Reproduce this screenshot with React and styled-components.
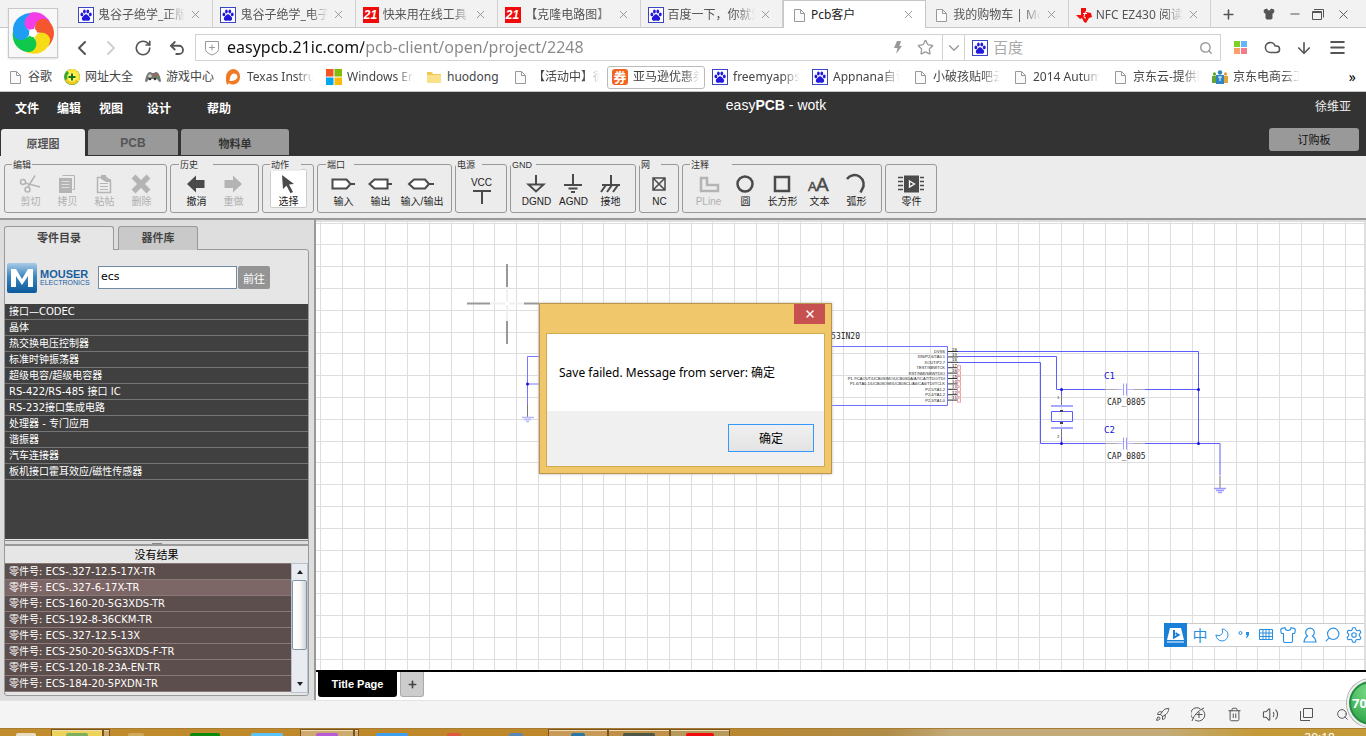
import React from "react";
import styled, { createGlobalStyle, css } from "styled-components";
import {
  ChevronDown,
  ChevronLeft,
  ChevronRight,
  Cloud,
  ArrowDown,
  Menu,
  Minus,
  Moon,
  Plus,
  Rocket,
  RotateCw,
  Search,
  Settings,
  Shirt,
  Star,
  Trash2,
  Undo2,
  Volume2,
  X,
} from "lucide-react";

const ui = `"Noto Sans", "Noto Sans CJK SC", sans-serif`;
const arial = `"Liberation Sans", "Noto Sans CJK SC", sans-serif`;
const verdana = `"DejaVu Sans", "Noto Sans CJK SC", sans-serif`;

const browserTabs = [
  { icon: "baidu", title: "鬼谷子绝学_正版" },
  { icon: "baidu", title: "鬼谷子绝学_电子" },
  { icon: "ic21", title: "快来用在线工具" },
  { icon: "ic21", title: "【克隆电路图】 -" },
  { icon: "baidu", title: "百度一下，你就知" },
  { icon: "page", title: "Pcb客户", active: true },
  { icon: "page", title: "我的购物车 | Mo" },
  { icon: "ti", title: "NFC EZ430 阅读" },
];

const bookmarks = [
  { icon: "page", title: "谷歌", width: 24 },
  { icon: "plus", title: "网址大全", width: 48 },
  { icon: "game", title: "游戏中心", width: 48 },
  { icon: "orange", title: "Texas Instru", width: 67, fade: true },
  { icon: "windows", title: "Windows En", width: 67, fade: true },
  { icon: "folder", title: "huodong", width: 53 },
  { icon: "page", title: "【活动中】德", width: 67, fade: true },
  { icon: "coupon", title: "亚马逊优惠券", width: 67, fade: true, boxed: true },
  { icon: "baidu", title: "freemyapps", width: 67, fade: true },
  { icon: "baidu", title: "Appnana自认", width: 67, fade: true },
  { icon: "page", title: "小破孩贴吧云", width: 67, fade: true },
  { icon: "page", title: "2014 Autum", width: 67, fade: true },
  { icon: "page", title: "京东云-提供图", width: 67, fade: true },
  { icon: "people", title: "京东电商云工", width: 67, fade: true },
];

const categories = [
  "接口—CODEC",
  "晶体",
  "热交换电压控制器",
  "标准时钟振荡器",
  "超级电容/超级电容器",
  "RS-422/RS-485 接口 IC",
  "RS-232接口集成电路",
  "处理器 - 专门应用",
  "谐振器",
  "汽车连接器",
  "板机接口霍耳效应/磁性传感器",
];

const parts = [
  "ECS-.327-12.5-17X-TR",
  "ECS-.327-6-17X-TR",
  "ECS-160-20-5G3XDS-TR",
  "ECS-192-8-36CKM-TR",
  "ECS-.327-12.5-13X",
  "ECS-250-20-5G3XDS-F-TR",
  "ECS-120-18-23A-EN-TR",
  "ECS-184-20-5PXDN-TR",
];

const pins = [
  "DVSS",
  "XIN/P2.6/TA0.1",
  "XOUT/P2.7",
  "TEST/SBWTCK",
  "RST/NMI/SBWTDIO",
  "P1.7/CAOUT/UCB0SIMO/UCB0SDA/A7/CA7/TDO/TDI",
  "P1.6/TA0.1/UCB0SOMI/UCB0SCL/A6/CA6/TDI/TCLK",
  "P2.5/TA1.2",
  "P2.4/TA1.2",
  "P2.3/TA1.0",
];

const Paw = () => (
  <g fill="#2319dc">
    <ellipse cx="3.9" cy="7.4" rx="1.4" ry="1.9" />
    <ellipse cx="6.4" cy="4.4" rx="1.4" ry="2" />
    <ellipse cx="9.8" cy="4.4" rx="1.4" ry="2" />
    <ellipse cx="12.3" cy="7.4" rx="1.4" ry="1.9" />
    <path d="M8 7.2c1.6 0 2.2 1.6 3.3 2.6 1.5 1.4 1 4-1.2 4-.9 0-1.3-.3-2.1-.3s-1.2.3-2.1.3c-2.2 0-2.7-2.6-1.2-4C5.8 8.8 6.4 7.2 8 7.2z" />
  </g>
);

function SiteIcon({ name }) {
  const shapes = {
    baidu: (
      <>
        <rect x="0.5" y="0.5" width="15" height="15" fill="#fff" stroke="#3a46c8" />
        <Paw />
      </>
    ),
    ic21: (
      <>
        <rect width="16" height="16" fill="#f00b0b" />
        <text x="7.5" y="12" textAnchor="middle" fill="#fff" fontSize="12" fontWeight="700" fontStyle="italic" fontFamily="Liberation Sans, sans-serif">
          21
        </text>
      </>
    ),
    page: <path d="M3.5 2.5h6l4 4v8h-10zM9.5 2.5v4h4" fill="#fafafa" stroke="#999" />,
    ti: (
      <>
        <path d="M5 1h5v4l5 1 1 4-3 1-3 5-2-1-2-4-2 1-4-4h5z" fill="#f20d0d" />
        <path d="M9.5 4.5L8 9.5q0 2 2 1.5M7 6.5h4" stroke="#fff" fill="none" />
      </>
    ),
    plus: (
      <>
        <circle cx="8" cy="8" r="8" fill="#3fa72f" />
        <path d="M8 0a8 8 0 0 1 6 13L3 2a8 8 0 0 1 5-2z" fill="#ffe53a" />
        <path d="M1 11a8 8 0 0 0 13 2L8 8z" fill="#f3c81c" />
        <circle cx="8" cy="8" r="4.8" fill="#fff35c" />
        <path d="M8 4.5v7M4.5 8h7" stroke="#17721c" strokeWidth="2" />
      </>
    ),
    game: (
      <>
        <path d="M3 4q2-2 4 0h2q2-2 4 0 2 2 3 8-1 3-4-2H4q-3 5-4 2Q1 6 3 4z" fill="#777" />
        <path d="M5 5v4M3 7h4" stroke="#e4f3e0" />
        <circle cx="11" cy="6" r="1.2" fill="#e64b3c" />
        <circle cx="13" cy="8" r="1.2" fill="#44a044" />
        <circle cx="5" cy="10" r="1.3" fill="#333" />
        <circle cx="10" cy="10" r="1.3" fill="#333" />
      </>
    ),
    orange: (
      <path
        fillRule="evenodd"
        d="M8 0a8 8 0 0 1 0 15.5c-2 0-4-.5-5-1.5l-2 2c-1-3-1-5-1-8a8 8 0 0 1 8-8zm0 4.500c-2 0-3.500 2-4 4.500l-.5 3c2 0 5 0 6.500-1.500 3-2.500 1-6-2-6z"
        fill="#f07a24"
      />
    ),
    windows: (
      <>
        <path d="M0 0h7.5v7.5H0z" fill="#f35325" />
        <path d="M8.5 0H16v7.5H8.5z" fill="#81bc06" />
        <path d="M0 8.5h7.5V16H0z" fill="#05a6f0" />
        <path d="M8.5 8.5H16V16H8.5z" fill="#ffba08" />
      </>
    ),
    folder: (
      <>
        <path d="M1 3h5l1 2h8v9H1z" fill="#f2c855" />
        <path d="M1 6h14v8H1z" fill="#fbe08a" />
      </>
    ),
    coupon: (
      <>
        <rect width="16" height="16" rx="3" fill="#f2641e" />
        <text x="8" y="13" textAnchor="middle" fill="#fff" fontSize="13" fontWeight="700" fontFamily="Noto Sans CJK SC, sans-serif">
          券
        </text>
      </>
    ),
    people: (
      <>
        <circle cx="2.5" cy="5" r="1.7" fill="#61a534" />
        <path d="M0 7h5v7H0z" fill="#61a534" />
        <circle cx="13.5" cy="5" r="1.7" fill="#e3a23a" />
        <path d="M11 7h5v7h-5z" fill="#e3a23a" />
        <circle cx="8" cy="3.5" r="2.2" fill="#2d85c8" />
        <path d="M4 6h8v9H4z" fill="#2d85c8" />
        <path d="M8 8v4M6 8h4" stroke="#fff" />
      </>
    ),
  };
  return (
    <Favicon viewBox="0 0 16 16" aria-hidden="true">
      {shapes[name]}
    </Favicon>
  );
}

function Pinwheel() {
  const petals = ["#f23de8", "#f4562f", "#f6dc17", "#10c94c", "#1f9df5"];
  return (
    <svg width="44" height="44" viewBox="-22 -22 44 44" aria-hidden="true">
      {petals.map((color, i) => (
        <path
          key={color}
          d="M-1 -3C-8 -4 -12 -10 -9 -16C-4 -22 8 -23 15 -14C17 -12 18 -9 18 -7C12 -13 3 -12 1 -3z"
          fill={color}
          transform={`rotate(${i * 72 - 4})`}
        />
      ))}
      <circle r="4" fill="#fff" />
    </svg>
  );
}

const toolIcons = {
  cut: (
    <g fill="none" stroke="currentColor" strokeWidth="1.5">
      <circle cx="5" cy="8" r="2.5" />
      <circle cx="9.5" cy="15.5" r="2.5" />
      <path d="M7 9l15 4M10 13l7-11.5" />
    </g>
  ),
  copy: (
    <>
      <path d="M7.5 1.5h12v14M19.5 15.5h-2" fill="none" stroke="currentColor" />
      <path d="M4 4h13v15H4z" fill="currentColor" />
      <path d="M6.5 7.5h8M6.5 10.5h8M6.5 13.5h8" stroke="#ddd" />
    </>
  ),
  paste: (
    <>
      <path d="M5.5 3.5h9l4 4v11h-13z" fill="#eee" stroke="currentColor" strokeWidth="1.5" />
      <path d="M9 1h5v4h5v3h-5l-5-3z" fill="currentColor" />
      <path d="M8 9.5h8M8 12.5h8M8 15.5h8" stroke="currentColor" />
    </>
  ),
  remove: <path d="M4.500 2.500l15 15M19.500 2.500l-15 15" stroke="currentColor" strokeWidth="5.5" />,
  undo: <path d="M3 10l9-8.5V6h8.5v8H12v4.5z" fill="currentColor" />,
  redo: <path d="M21 10l-9-8.5V6H3.5v8H12v4.5z" fill="currentColor" />,
  select: <path d="M6 1l12 9-5 .5 4 7.5-2.5 1.2-4-7.5L7 15z" fill="currentColor" />,
  input: (
    <g fill="none" stroke="currentColor" strokeWidth="2">
      <path d="M1.5 5.5h14l4 4.5-4 4.5h-14z" fill="#fff" />
      <path d="M19 10h5" />
    </g>
  ),
  output: (
    <g fill="none" stroke="currentColor" strokeWidth="2">
      <path d="M19.5 5.5h-13L1.5 10l5 4.5h13z" fill="#fff" />
      <path d="M19 10h5" />
    </g>
  ),
  inout: (
    <g fill="none" stroke="currentColor" strokeWidth="2">
      <path d="M5 5.5h11l4 4.5-4 4.500H5L0 10z" fill="#fff" />
      <path d="M20 10h5" />
    </g>
  ),
  dgnd: (
    <path d="M12 1v9.5M4.5 10.5h15L12 17.5z" fill="none" stroke="currentColor" strokeWidth="2" />
  ),
  agnd: (
    <path d="M12 0v11M3 11h18M7.5 14.5h9M10 18h4" fill="none" stroke="currentColor" strokeWidth="2" />
  ),
  chassis: (
    <path d="M13 1v10M4 11h18M8 11l-5 7M14 11l-5 7M20 11l-5 7" fill="none" stroke="currentColor" strokeWidth="2" />
  ),
  nc: (
    <path d="M6 4h12v12H6zM6 4l12 12M18 4L6 16" fill="none" stroke="currentColor" strokeWidth="1.5" />
  ),
  pline: (
    <path d="M5 4h6v7h11v6H5z" fill="none" stroke="currentColor" strokeWidth="2.5" />
  ),
  circle: <circle cx="12" cy="10" r="7.5" fill="none" stroke="currentColor" strokeWidth="2.5" />,
  rect: <path d="M5 3h14v14H5z" fill="none" stroke="currentColor" strokeWidth="2.5" />,
  text: (
    <g fill="currentColor" stroke="currentColor" strokeWidth="0.5" fontFamily="Liberation Sans, sans-serif">
      <text x="1" y="17" fontSize="13">A</text>
      <text x="9" y="17" fontSize="19">A</text>
    </g>
  ),
  arc: <path d="M3 5A9 9 0 0 1 18 15.5l-1.5 3" fill="none" stroke="currentColor" strokeWidth="2.5" />,
  chip: (
    <>
      <path d="M5 1.5h15v17H5z" fill="currentColor" />
      <path d="M-1 3.5h5M-1 7.5h5M-1 11.5h5M-1 15.5h5M21 3.5h4M21 7.5h4M21 11.5h4M21 15.5h4" stroke="currentColor" strokeWidth="1.5" />
      <path d="M10.5 7l5 3-5 3z" fill="none" stroke="#fff" strokeWidth="1.3" />
    </>
  ),
};

const toolGroups = [
  {
    title: "编辑",
    left: 7,
    width: 20,
    tools: [
      { icon: "cut", label: "剪切", disabled: true },
      { icon: "copy", label: "拷贝", disabled: true },
      { icon: "paste", label: "粘帖", disabled: true },
      { icon: "remove", label: "删除", disabled: true },
    ],
  },
  {
    title: "历史",
    left: 8,
    width: 34,
    tools: [
      { icon: "undo", label: "撤消" },
      { icon: "redo", label: "重做", disabled: true },
    ],
  },
  { title: "动作", left: 7, width: 31, tools: [{ icon: "select", label: "选择", active: true }] },
  {
    title: "端口",
    left: 8,
    width: 28,
    tools: [
      { icon: "input", label: "输入" },
      { icon: "output", label: "输出" },
      { icon: "inout", label: "输入/输出", wide: true },
    ],
  },
  { title: "电源", left: 0, width: 26, tools: [{ vcc: true, label: "VCC" }] },
  {
    title: "GND",
    left: 0,
    width: 25,
    tools: [
      { icon: "dgnd", label: "DGND" },
      { icon: "agnd", label: "AGND" },
      { icon: "chassis", label: "接地" },
    ],
  },
  { title: "网", left: 0, width: 21, tools: [{ icon: "nc", label: "NC", narrow: true }] },
  {
    title: "注释",
    left: 7,
    width: 42,
    tools: [
      { icon: "pline", label: "PLine", disabled: true },
      { icon: "circle", label: "圆" },
      { icon: "rect", label: "长方形" },
      { icon: "text", label: "文本" },
      { icon: "arc", label: "弧形" },
    ],
  },
  { tools: [{ icon: "chip", label: "零件" }] },
];

function Tool({ tool }) {
  return (
    <ToolButton
      type="button"
      disabled={tool.disabled}
      $active={tool.active}
      $width={tool.wide ? 46 : tool.narrow ? 25 : 37}
    >
      {tool.vcc ? (
        <>
          <ToolLabel>{tool.label}</ToolLabel>
          <svg width="24" height="15" viewBox="0 0 24 15" aria-hidden="true">
            <path d="M3 2h18M12 2v13" stroke="currentColor" strokeWidth="2" />
          </svg>
        </>
      ) : (
        <>
          <ToolIcon viewBox="1 0 24 20" aria-hidden="true">
            {toolIcons[tool.icon]}
          </ToolIcon>
          <ToolLabel>{tool.label}</ToolLabel>
        </>
      )}
    </ToolButton>
  );
}

function Capacitor({ y, name }) {
  return (
    <>
      <path d={`M1105.5 ${y}h12M1132.5 ${y}h12`} stroke="#a9a9b8" />
      <path d={`M1117.5 ${y}h5M1127 ${y}h5.5`} stroke="#b8b8ff" />
      <path d={`M1123.5 ${y - 6}v12M1126.5 ${y - 6}v12`} stroke="#9a9aff" />
      <text x="1104" y={y - 11} fontSize="9" fill="#1414d8">{name}</text>
      <text x="1107" y={y + 15} fontSize="8" fill="#222">CAP_0805</text>
    </>
  );
}

// drawn in page coordinates, shifted back to the canvas origin
function Schematic() {
  const step = 21.8;
  const pinY = (i) => 351.5 + i * 5.4;
  return (
    <Drawing aria-hidden="true">
      <g stroke="#dedede" shapeRendering="crispEdges">
        {Array.from({ length: 80 }, (_, i) => {
          const x = Math.round(4 + i * step) + 0.5;
          return <line key={x} x1={x} x2={x} y1="0" y2="100%" />;
        })}
        {Array.from({ length: 50 }, (_, i) => {
          const y = Math.round(i * step + 0.5) + 0.5;
          return <line key={y} x1="0" x2="100%" y1={y} y2={y} />;
        })}
      </g>
      <g transform="translate(-316 -222)" fill="none" fontFamily="DejaVu Sans Mono, Liberation Mono, monospace">
        <path d="M507 264v23M507 321v23M467 303.5h23M524 303.5h15" stroke="#999" strokeWidth="2" />
        <path d="M507 287v34M490 303.5h34" stroke="#f0f0f0" strokeWidth="2" />
        <circle cx="507" cy="303.5" r="2" fill="#fff" />

        <path d="M540 356.5h-12.5v49M527.5 384h13" stroke="#7878ff" />
        <path d="M527.5 405v12" stroke="#777" />
        <path d="M522 417.5h12M524 419.5h7M526 421.5h3" stroke="#b8b8ff" strokeWidth="1.5" />
        <circle cx="527.5" cy="384" r="1.5" fill="#1414d8" />

        <path d="M700 346.5h247.5v59H700z" stroke="#7070ff" />
        <text x="860" y="339" textAnchor="end" fontSize="8" fill="#222">MSP430G2553IN20</text>
        {pins.map((pin, i) => (
          <g key={pin}>
            <text x="945" y={pinY(i) + 1.5} textAnchor="end" fontSize="4" fill="#222" fontFamily="Liberation Sans, sans-serif">
              {pin}
            </text>
            <path d={`M948 ${pinY(i)}h10`} stroke="#333" />
            <text x="952" y={pinY(i) - 1} fontSize="4" fill="#222">{20 - i}</text>
            {i > 2 && <rect x="957.5" y={pinY(i) - 2} width="3" height="4" stroke="#f0a0a0" />}
          </g>
        ))}

        <g stroke="#5c5cff">
          <path d="M958 351.5h240.5v92.5" />
          <path d="M958 356.5h98.5v33h49M1144.5 389.5h54" />
          <path d="M958 362.5h82.5v81h65M1144.5 443.5H1220v32" />
          <path d="M1061.5 389v6M1061.5 438v6" />
          <path d="M1051.5 411.5h21v10h-21z" />
        </g>
        <path d="M1051 406h22M1051 428h22" stroke="#a8a8ff" strokeWidth="2" />
        <path d="M1061.5 395v10M1061.5 429v9M1220 476v12" stroke="#777" />
        <path d="M1060 411h3M1060 423h3" stroke="#444" strokeWidth="2" />
        <text x="1057" y="399" fontSize="4" fill="#333">1</text>
        <text x="1057" y="438" fontSize="4" fill="#333">2</text>
        <path d="M1214 488.5h12M1216 490.5h8M1218 492.5h4" stroke="#9a9aff" strokeWidth="1.5" />
        <g fill="#1414d8">
          <circle cx="1061.5" cy="389.5" r="1.5" />
          <circle cx="1061.5" cy="443.5" r="1.5" />
          <circle cx="1198.5" cy="389.5" r="1.5" />
          <circle cx="1198.5" cy="443.5" r="1.5" />
        </g>
        <Capacitor y={389.5} name="C1" />
        <Capacitor y={443.5} name="C2" />
      </g>
    </Drawing>
  );
}

function Browser() {
  return (
    <Chrome>
      <Logo type="button" aria-label="浏览器菜单">
        <Pinwheel />
      </Logo>
      <TabStrip>
        {browserTabs.map((tab, i) => (
          <BrowserTab key={i} $active={tab.active}>
            <SiteIcon name={tab.icon} />
            <TabTitle $fade={!tab.active}>{tab.title}</TabTitle>
            <TabClose type="button" aria-label="关闭标签">
              <X size={13} strokeWidth={1.5} />
            </TabClose>
          </BrowserTab>
        ))}
        <WindowButtons>
          <IconButton type="button" $width={34} aria-label="新标签">
            <Plus size={15} strokeWidth={2.5} />
          </IconButton>
          <IconButton type="button" $width={48} aria-label="皮肤">
            <Shirt size={12} fill="currentColor" />
          </IconButton>
          <IconButton type="button" $width={4} aria-label="最小化">
            <Minus size={14} strokeWidth={2} />
          </IconButton>
          <IconButton type="button" $width={42} aria-label="还原">
            <svg width="12" height="11" viewBox="0 0 12 11">
              <path d="M2 .5h9.5v8M.5 2.5h9v8h-9zM.5 3.5h9" fill="none" stroke="currentColor" />
            </svg>
          </IconButton>
          <IconButton type="button" $width={8} aria-label="关闭">
            <X size={15} strokeWidth={1.5} />
          </IconButton>
        </WindowButtons>
      </TabStrip>

      <AddressRow>
        <IconButton type="button" $width={30} aria-label="后退">
          <ChevronLeft size={24} strokeWidth={2} />
        </IconButton>
        <IconButton type="button" $width={28} $faint aria-label="前进">
          <ChevronRight size={24} strokeWidth={2} />
        </IconButton>
        <IconButton type="button" $width={36} aria-label="刷新">
          <RotateCw size={18} strokeWidth={2.2} />
        </IconButton>
        <IconButton type="button" $width={32} aria-label="撤销关闭">
          <Undo2 size={18} strokeWidth={2.4} />
        </IconButton>
        <AddressBox>
          <IconButton type="button" $width={31} $grey aria-label="网站信息">
            <svg width="14" height="16" viewBox="0 0 14 16">
              <path d="M.5 1.5h13v8q0 3-6.500 5.500Q.5 12.500.5 9.500zM7 4.500v6M4 7.500h6" fill="none" stroke="currentColor" />
            </svg>
          </IconButton>
          <UrlInput aria-label="地址" defaultValue="easypcb.21ic.com/pcb-client/open/project/2248" />
          <IconButton type="button" $width={20} $grey aria-label="极速模式">
            <svg width="8" height="13" viewBox="0 0 8 13">
              <path d="M3 0h4L5.500 5H8L2 13l1.500-6H0z" fill="currentColor" />
            </svg>
          </IconButton>
          <IconButton type="button" $width={34} $grey aria-label="收藏">
            <Star size={17} strokeWidth={1.8} />
          </IconButton>
          <DropButton type="button" aria-label="更多">
            <ChevronDown size={18} strokeWidth={1.8} />
          </DropButton>
          <SearchBox>
            <SiteIcon name="baidu" />
            <SearchInput aria-label="搜索" placeholder="百度" />
            <IconButton type="button" $width={28} $grey aria-label="搜索">
              <Search size={14} strokeWidth={2.4} />
            </IconButton>
          </SearchBox>
        </AddressBox>
        <IconButton type="button" $width={32} aria-label="应用">
          <svg width="13" height="13" viewBox="0 0 13 13">
            <path d="M0 0h6v6H0z" fill="#7ed321" />
            <path d="M7 0h6v6H7z" fill="#62b5f7" />
            <path d="M0 7h6v6H0z" fill="#f9a06d" />
            <path d="M7 7h6v6H7z" fill="#f17c8b" />
          </svg>
        </IconButton>
        <IconButton type="button" $width={32} aria-label="云">
          <Cloud size={17} strokeWidth={2.2} />
        </IconButton>
        <IconButton type="button" $width={32} aria-label="下载">
          <ArrowDown size={18} strokeWidth={2.2} />
        </IconButton>
        <IconButton type="button" $width={34} aria-label="菜单">
          <Menu size={19} strokeWidth={2.4} />
        </IconButton>
      </AddressRow>

      <BookmarkBar>
        {bookmarks.map((mark) => (
          <Bookmark key={mark.title} href="#" $boxed={mark.boxed}>
            <SiteIcon name={mark.icon} />
            <BookmarkText $width={mark.width} $fade={mark.fade}>
              {mark.title}
            </BookmarkText>
          </Bookmark>
        ))}
        <MoreMarks type="button">»</MoreMarks>
      </BookmarkBar>
    </Chrome>
  );
}

function Sidebar() {
  return (
    <SidePane>
      <SideTabs>
        <SideTab type="button" $active $width={110}>零件目录</SideTab>
        <SideTab type="button" $width={80}>器件库</SideTab>
      </SideTabs>
      <SidePanel>
        <SearchForm onSubmit={(e) => e.preventDefault()}>
          <svg width="84" height="32" viewBox="0 0 84 32" aria-label="Mouser Electronics">
            <defs>
              <linearGradient id="mouser" x1="0" y1="0" x2="0" y2="1">
                <stop offset="0" stopColor="#a8cbe6" />
                <stop offset="0.45" stopColor="#3d87bf" />
                <stop offset="1" stopColor="#0c5a9c" />
              </linearGradient>
            </defs>
            <rect x="0" y="1" width="30" height="30" rx="2" fill="url(#mouser)" />
            <path d="M4 25V7h5l6 10 6-10h5v18h-5V14l-6 9-6-9v11z" fill="#fff" />
            <g fill="#1b5f9e" fontFamily="Liberation Sans, sans-serif" fontWeight="700">
              <text x="33" y="16" fontSize="11">MOUSER</text>
              <text x="33" y="23" fontSize="7" fontWeight="400">ELECTRONICS</text>
            </g>
          </svg>
          <PartInput aria-label="零件搜索" defaultValue="ecs" />
          <GoButton type="submit">前往</GoButton>
        </SearchForm>
        <CategoryList>
          {categories.map((name) => (
            <Category key={name}>{name}</Category>
          ))}
        </CategoryList>
        <Splitter>
          <Grip />
        </Splitter>
        <ResultTitle>没有结果</ResultTitle>
        <Results>
          <PartList>
            {parts.map((part, i) => (
              <Part key={part} $hover={i === 1}>
                零件号: {part}
              </Part>
            ))}
          </PartList>
          <ScrollTrack>
            <ScrollArrow $up />
            <ScrollThumb />
            <ScrollArrow />
          </ScrollTrack>
        </Results>
      </SidePanel>
    </SidePane>
  );
}

function ImeBar() {
  return (
    <Ime>
      <ImeLogo>
        <svg width="17" height="16" viewBox="0 0 17 16">
          <path d="M3 1h11l3 12H0z" fill="#fff" />
          <path d="M7 3v7.500l4.500-2.500L8.500 6" fill="none" stroke="#1a7fd6" strokeWidth="2" />
          <path d="M0 15h17" stroke="#fff" />
        </svg>
      </ImeLogo>
      <ImeKey type="button">中</ImeKey>
      <ImeKey type="button" aria-label="半角">
        <Moon size={16} strokeWidth={1.5} transform="scale(-1 1)" />
      </ImeKey>
      <ImeKey type="button" aria-label="标点">
        <svg width="12" height="10" viewBox="0 0 12 10">
          <circle cx="2.5" cy="3" r="1.5" fill="none" stroke="currentColor" />
          <path d="M8 2h3v3L9 8H8l1-3H8z" fill="currentColor" />
        </svg>
      </ImeKey>
      <ImeKey type="button" aria-label="键盘">
        <svg width="14" height="11" viewBox="0 0 14 11">
          <path d="M.5.5h13v10H.5zM.5 4h13M.5 7.5h13M4 .5v10M7 .5v10M10 .5v10" fill="none" stroke="currentColor" />
        </svg>
      </ImeKey>
      <ImeKey type="button" aria-label="皮肤">
        <Shirt size={18} strokeWidth={1.5} />
      </ImeKey>
      <ImeKey type="button" aria-label="账户">
        <svg width="14" height="16" viewBox="0 0 14 16">
          <path d="M4.500 9A4.300 4.300 0 1 1 9.500 9q3 2 3.500 6H1q.5-4 3.500-6z" fill="none" stroke="currentColor" strokeWidth="1.2" />
        </svg>
      </ImeKey>
      <ImeKey type="button" aria-label="搜索">
        <Search size={17} strokeWidth={1.6} transform="scale(-1 1)" />
      </ImeKey>
      <ImeKey type="button" aria-label="设置">
        <Settings size={18} strokeWidth={1.5} />
      </ImeKey>
    </Ime>
  );
}

function SaveDialog() {
  return (
    <Dialog role="alertdialog" aria-labelledby="save-message">
      <DialogTop>
        <DialogClose type="button" aria-label="关闭">
          <X size={12} strokeWidth={3} />
        </DialogClose>
      </DialogTop>
      <DialogBody>
        <DialogMessage id="save-message">Save failed. Message from server: 确定</DialogMessage>
        <DialogFooter>
          <OkButton type="button">确定</OkButton>
        </DialogFooter>
      </DialogBody>
    </Dialog>
  );
}

function App() {
  return (
    <Screen>
      <Global />
      <Browser />

      <AppHeader>
        <TopRow>
          <MenuBar>
            <MenuItem type="button" $gap={18}>文件</MenuItem>
            <MenuItem type="button" $gap={18}>编辑</MenuItem>
            <MenuItem type="button" $gap={24}>视图</MenuItem>
            <MenuItem type="button" $gap={36}>设计</MenuItem>
            <MenuItem type="button" $gap={0}>帮助</MenuItem>
          </MenuBar>
          <AppTitle>
            easy<b>PCB</b> - wotk
          </AppTitle>
          <UserName>徐维亚</UserName>
        </TopRow>
        <ViewRow>
          <ViewTab type="button" $active $width={84}>原理图</ViewTab>
          <ViewTab type="button" $width={90}>PCB</ViewTab>
          <ViewTab type="button" $width={108} $dark>物料单</ViewTab>
          <OrderButton type="button">订购板</OrderButton>
        </ViewRow>
      </AppHeader>

      <Toolbar>
        {toolGroups.map((group, i) => (
          <ToolGroup key={i} role="group" aria-label={group.title}>
            {group.title && (
              <GroupTitle $left={group.left} $width={group.width}>
                {group.title}
              </GroupTitle>
            )}
            {group.tools.map((tool) => (
              <Tool key={tool.label} tool={tool} />
            ))}
          </ToolGroup>
        ))}
      </Toolbar>

      <Workspace>
        <Sidebar />
        <Editor>
          <Canvas>
            <Schematic />
            <ImeBar />
          </Canvas>
          <PageTabs>
            <PageTab type="button">Title Page</PageTab>
            <AddPage type="button" aria-label="添加页面">
              <Plus size={11} strokeWidth={3.5} />
            </AddPage>
          </PageTabs>
        </Editor>
      </Workspace>

      <StatusBar>
        <IconButton type="button" $width={36} aria-label="加速">
          <Rocket size={15} strokeWidth={1.6} />
        </IconButton>
        <IconButton type="button" $width={36} aria-label="网速">
          <svg width="15" height="15" viewBox="0 0 15 15">
            <path d="M11 2.500A6 6 0 1 1 4 13M2 11.500A6 6 0 0 1 9.500 2M1 14Q4 5 13 1M5.500 7.500h6M8 5v6" fill="none" stroke="currentColor" />
          </svg>
        </IconButton>
        <IconButton type="button" $width={36} aria-label="清理">
          <Trash2 size={15} strokeWidth={1.6} />
        </IconButton>
        <IconButton type="button" $width={36} aria-label="声音">
          <Volume2 size={17} strokeWidth={1.5} />
        </IconButton>
        <IconButton type="button" $width={36} aria-label="窗口">
          <svg width="13" height="13" viewBox="0 0 13 13">
            <path d="M3.5.5h9v9h-9zM.5 3v9.5H10" fill="none" stroke="currentColor" />
          </svg>
        </IconButton>
        <IconButton type="button" $width={36} aria-label="缩放">
          <Search size={13} strokeWidth={1.8} />
        </IconButton>
      </StatusBar>

      <Taskbar>
        <TaskSlot $width={51}>
          <TaskMark $width={20} $color="#e8ddc4" />
        </TaskSlot>
        <TaskSlot $width={52} $open="#ecd45a">
          <TaskMark $width={22} $color="#7fae5c" />
        </TaskSlot>
        <TaskSlot $width={7} $open="#cdaa70" />
        <TaskSlot $width={52}>
          <TaskMark $width={16} $color="#d0a95c" />
        </TaskSlot>
        <TaskSlot $width={86}>
          <TaskMark $width={30} $color="#0b8a0b" />
        </TaskSlot>
        <TaskSlot $width={38}>
          <TaskMark $width={32} $color="#5cc3fb" />
        </TaskSlot>
        <TaskSlot $width={14} />
        <TaskSlot $width={54} $open="#cdaa70">
          <TaskMark $width={22} $color="#b75bd6" />
        </TaskSlot>
        <TaskSlot $width={5} $open="#cdaa70" />
        <TaskSlot $width={65}>
          <TaskMark $width={32} $color="#3fa0f0" />
        </TaskSlot>
        <TaskSlot $width={60}>
          <TaskMark $width={14} $color="#dc5b3c" />
        </TaskSlot>
        <TaskSlot $width={64}>
          <TaskMark $width={14} $color="#5a86b8" />
        </TaskSlot>
        <TaskSlot $width={60} $open="#c79a58">
          <TaskMark $width={14} $color="#2a78a8" />
        </TaskSlot>
        <TaskSlot $width={62} $open="#bf9048">
          <TaskMark $width={32} $color="#4c5848" />
        </TaskSlot>
        <TaskSlot $width={60} $open="#b59a5c">
          <TaskMark $width={28} $color="#f00d0d" />
        </TaskSlot>
        <Clock>20:18</Clock>
      </Taskbar>
      <SpeedBall type="button">70</SpeedBall>
      <SaveDialog />
    </Screen>
  );
}

export default App;

const Global = createGlobalStyle`
  * {
    box-sizing: border-box;
  }
  body {
    margin: 0;
    overflow: hidden;
  }
  button {
    margin: 0;
    padding: 0;
    border: 0;
    background: none;
    font: inherit;
    color: inherit;
  }
  ul {
    margin: 0;
    padding: 0;
    list-style: none;
  }
`;

const Screen = styled.div`
  position: relative;
  display: flex;
  flex-direction: column;
  height: 100vh;
  overflow: hidden;
  font-family: ${ui};
  font-size: 12px;
`;

const Chrome = styled.header`
  position: relative;
  flex-shrink: 0;
  background: #fff;
  border-bottom: 1px solid #c4c4c4;
`;

const Logo = styled.button`
  position: absolute;
  top: 8px;
  left: 8px;
  display: flex;
  align-items: center;
  justify-content: center;
  width: 50px;
  height: 50px;
  background: #f8f8f8;
  border: 1px solid #c8c8c8;
  box-shadow: 0 1px 2px #ddd;
`;

const TabStrip = styled.div`
  display: flex;
  height: 28px;
  padding-left: 71px;
  background: #f2f2f2;
  box-shadow: inset 0 -1px #c6c6c6;
`;

const BrowserTab = styled.div`
  display: flex;
  align-items: center;
  flex: 1;
  min-width: 0;
  gap: 4px;
  padding: 1px 10px 0 7px;
  border-right: 1px solid #d0d0d0;
  color: #555;

  ${(props) =>
    props.$active &&
    css`
      padding-top: 0;
      background: #fff;
      border: 1px solid #c6c6c6;
      border-bottom: 0;
      color: #222;
    `}
`;

const Favicon = styled.svg`
  width: 16px;
  height: 16px;
  flex-shrink: 0;
`;

const TabTitle = styled.span`
  flex: 1;
  min-width: 0;
  overflow: hidden;
  white-space: nowrap;
  line-height: 20px;

  ${(props) =>
    props.$fade &&
    css`
      mask-image: linear-gradient(to right, #000 calc(100% - 18px), transparent);
    `}
`;

const TabClose = styled.button`
  display: flex;
  color: #888;
`;

const WindowButtons = styled.div`
  display: flex;
  width: 155px;
`;

const IconButton = styled.button`
  display: flex;
  align-items: center;
  justify-content: center;
  flex-shrink: 0;
  width: ${(props) => props.$width}px;
  color: ${(props) => (props.$faint ? "#d0d0d0" : props.$grey ? "#999" : "#555")};

  svg {
    flex-shrink: 0;
  }
`;

const AddressRow = styled.div`
  display: flex;
  height: 38px;
  padding: 6px 12px 5px 67px;
`;

const AddressBox = styled.div`
  display: flex;
  flex: 1;
  min-width: 0;
  margin: 0 3px 0 2px;
  border: 1px solid #d2d2d2;
`;

const UrlInput = styled.input`
  flex: 1;
  min-width: 0;
  padding: 0 0 2px;
  border: 0;
  outline: 0;
  font-family: ${ui};
  font-size: 16px;
  color: transparent;
  background: linear-gradient(to right, #111 137px, #888 137px);
  background-clip: text;
`;

const DropButton = styled.button`
  display: flex;
  align-items: center;
  justify-content: center;
  width: 22px;
  border-left: 1px solid #d2d2d2;
  color: #999;
`;

const SearchBox = styled.div`
  display: flex;
  align-items: center;
  width: 256px;
  padding-left: 7px;
  border-left: 1px solid #d2d2d2;
`;

const SearchInput = styled.input`
  flex: 1;
  min-width: 0;
  padding: 0 5px 2px;
  border: 0;
  outline: 0;
  background: none;
  font-family: ${ui};
  font-size: 15px;

  &::placeholder {
    color: #aaa;
  }
`;

const BookmarkBar = styled.nav`
  display: flex;
  align-items: flex-start;
  height: 25px;
  padding-left: 2px;
`;

const Bookmark = styled.a`
  display: flex;
  align-items: center;
  flex-shrink: 0;
  gap: 5px;
  height: 23px;
  margin-right: 2px;
  padding: 0 4px 1px;
  border: 1px solid ${(props) => (props.$boxed ? "#bbb" : "transparent")};
  border-radius: 3px;
  color: #444;
  text-decoration: none;
`;

const BookmarkText = styled.span`
  width: ${(props) => props.$width}px;
  overflow: hidden;
  white-space: nowrap;
  line-height: 20px;

  ${(props) =>
    props.$fade &&
    css`
      mask-image: linear-gradient(to right, #000 calc(100% - 18px), transparent);
    `}
`;

const MoreMarks = styled.button`
  margin-left: auto;
  padding-right: 10px;
  font-size: 14px;
  line-height: 22px;
`;

const AppHeader = styled.header`
  display: flex;
  flex-direction: column;
  justify-content: space-between;
  flex-shrink: 0;
  height: 64px;
  background: #333;
  color: #fff;
`;

const TopRow = styled.div`
  display: grid;
  grid-template-columns: 237px 1fr 51px;
  height: 32px;
`;

const MenuBar = styled.nav`
  display: flex;
  align-items: center;
  padding-left: 15px;
`;

const MenuItem = styled.button`
  margin-right: ${(props) => props.$gap}px;
  font-weight: 700;
`;

const AppTitle = styled.div`
  font-family: ${arial};
  font-size: 14px;
  line-height: 26px;
  text-align: center;
`;

const UserName = styled.span`
  line-height: 30px;
  color: #eee;
`;

const ViewRow = styled.div`
  display: flex;
  align-items: flex-end;
  gap: 3px;
  padding: 0 7px 0 1px;
`;

const ViewTab = styled.button`
  width: ${(props) => props.$width}px;
  height: ${(props) => (props.$active ? 27 : 26)}px;
  margin-bottom: ${(props) => (props.$active ? 0 : 1)}px;
  padding-top: ${(props) => (props.$active ? 0 : 2)}px;
  border-radius: 3px 3px 0 0;
  background: ${(props) => (props.$active ? "#ececec" : "#999")};
  color: ${(props) => (props.$dark ? "#333" : "#555")};
  font-family: ${arial};
  font-size: ${(props) => (props.$dark || props.$active ? 11 : 12)}px;
  font-weight: 700;
`;

const OrderButton = styled.button`
  width: 90px;
  height: 23px;
  margin: 0 0 5px auto;
  padding-bottom: 2px;
  border-radius: 3px;
  background: #999;
  color: #111;
  font-size: 11px;
`;

const Toolbar = styled.div`
  display: flex;
  flex-shrink: 0;
  gap: 3px;
  padding: 8px 4px 5px;
  background: #ececec;
  border-bottom: 2px solid #999;
`;

const ToolGroup = styled.div`
  position: relative;
  display: flex;
  padding: 4px 6px 4px 7px;
  border: 1px solid #999;
  border-radius: 3px;
`;

const GroupTitle = styled.span`
  position: absolute;
  top: -6px;
  left: ${(props) => props.$left}px;
  width: ${(props) => props.$width}px;
  padding-left: 1px;
  background: #ececec;
  color: #333;
  font-family: ${arial};
  font-size: 9px;
  line-height: 12px;
  white-space: nowrap;
`;

const ToolButton = styled.button`
  display: flex;
  flex-direction: column;
  align-items: center;
  justify-content: flex-end;
  width: ${(props) => props.$width}px;
  height: 39px;
  color: #4a4a4a;

  ${(props) =>
    props.$active &&
    css`
      background: #fff;
      border-radius: 2px;
      box-shadow: inset 0 0 0 1px #ccc;
    `}

  &:disabled {
    color: #b4b4b4;
  }
`;

const ToolIcon = styled.svg`
  width: 24px;
  height: 20px;
  margin-bottom: 2px;
  overflow: visible;
  flex-shrink: 0;
`;

const ToolLabel = styled.span`
  color: #222;
  font-family: ${arial};
  font-size: 10px;
  line-height: 12px;
  white-space: nowrap;

  ${ToolButton}:disabled & {
    color: #b0b0b0;
  }

  &:first-child {
    margin-bottom: 0;
  }

  & + svg {
    margin-bottom: 4px;
  }
`;

const Workspace = styled.main`
  display: flex;
  flex: 1;
  min-height: 0;
`;

const SidePane = styled.aside`
  display: flex;
  flex-direction: column;
  flex-shrink: 0;
  width: 316px;
  padding: 6px 5px 4px 4px;
  background: #dedede;
  border-right: 2px solid #999;
`;

const SideTabs = styled.div`
  display: flex;
  gap: 4px;
`;

const SideTab = styled.button`
  position: relative;
  z-index: ${(props) => (props.$active ? 1 : 0)};
  width: ${(props) => props.$width}px;
  height: 24px;
  padding-bottom: 3px;
  border: 1px solid #999;
  border-bottom: 0;
  border-radius: 3px 3px 0 0;
  background: ${(props) => (props.$active ? "#e6e6e6" : "#c9c9c9")};
  color: #444;
  font-size: 11px;
  font-weight: 700;
`;

const SidePanel = styled.section`
  display: flex;
  flex-direction: column;
  flex: 1;
  min-height: 0;
  margin-top: -1px;
  padding-bottom: 2px;
  border: 1px solid #999;
  border-radius: 0 3px 3px 3px;
  background: #e6e6e6;
`;

const SearchForm = styled.form`
  display: flex;
  align-items: center;
  flex-shrink: 0;
  height: 54px;
  padding: 1px 0 0 2px;
`;

const PartInput = styled.input`
  width: 139px;
  height: 23px;
  margin: 0 1px 0 7px;
  padding: 0 2px 2px;
  border: 1px solid #6f8ba6;
  background: #fff;
  font-family: ${verdana};
  font-size: 11px;
`;

const GoButton = styled.button`
  width: 32px;
  height: 23px;
  border-radius: 2px;
  background: #949494;
  color: #fff;
  font-size: 11px;
`;

const CategoryList = styled.ul`
  flex: 1;
  min-height: 0;
  overflow: hidden;
  background: #404040;
`;

const Category = styled.li`
  height: 16px;
  padding-left: 4px;
  border-bottom: 1px solid #757575;
  color: #fff;
  font-family: ${verdana};
  font-size: 10px;
  line-height: 16px;
`;

const Splitter = styled.div`
  display: flex;
  justify-content: center;
  align-items: flex-end;
  flex-shrink: 0;
  height: 6px;
  margin-top: 1px;
  background: #ddd;
  border-top: 1px solid #888;
  border-bottom: 2px solid #999;
`;

const Grip = styled.i`
  width: 10px;
  height: 1px;
  background: #888;
`;

const ResultTitle = styled.div`
  font-size: 11px;
  line-height: 17px;
  text-align: center;
`;

const Results = styled.div`
  display: flex;
  flex-shrink: 0;
`;

const PartList = styled.ul`
  flex: 1;
  border-top: 1px solid #8a7878;
`;

const Part = styled.li`
  height: 16px;
  padding-left: 4px;
  border-bottom: 1px solid #8a7878;
  background: ${(props) => (props.$hover ? "#7d6666" : "#5c4e4c")};
  color: #fff;
  font-family: ${verdana};
  font-size: 10px;
  line-height: 16px;
`;

const ScrollTrack = styled.div`
  display: flex;
  flex-direction: column;
  align-items: center;
  justify-content: space-between;
  width: 17px;
  background: #e8ecf0;
  border: 1px solid #b8c2ca;
`;

const ScrollArrow = styled.i`
  margin: 6px 0;
  border: 3px solid transparent;
  ${(props) =>
    props.$up
      ? "border-top: 0; border-bottom: 4px solid #222;"
      : "border-bottom: 0; border-top: 4px solid #222;"}
`;

const ScrollThumb = styled.i`
  width: 15px;
  height: 70px;
  margin: 0 0 26px;
  border: 1px solid #8496a4;
  border-radius: 2px;
  background: linear-gradient(to right, #fff, #fafafa 50%, #cfd3d6);
`;

const Editor = styled.section`
  display: flex;
  flex-direction: column;
  flex: 1;
  min-width: 0;
  background: #fff;
`;

const Canvas = styled.div`
  position: relative;
  flex: 1;
  min-height: 0;
  border-top: 2px solid #dedede;
  border-right: 2px solid #dedede;
  overflow: hidden;
`;

const Drawing = styled.svg`
  display: block;
  width: 100%;
  height: 100%;
`;

const PageTabs = styled.div`
  display: flex;
  gap: 3px;
  height: 30px;
  padding: 0 0 3px 2px;
  border-top: 2px solid #000;
`;

const PageTab = styled.button`
  width: 79px;
  padding-bottom: 2px;
  border-radius: 0 0 3px 3px;
  background: #000;
  color: #fff;
  font-family: ${arial};
  font-size: 11px;
  font-weight: 700;
`;

const AddPage = styled.button`
  display: flex;
  align-items: center;
  justify-content: center;
  width: 24px;
  border: 1px solid #aaa;
  border-top: 0;
  border-radius: 0 0 3px 3px;
  background: #ccc;
  color: #444;
`;

const Ime = styled.div`
  position: absolute;
  right: -2px;
  bottom: 23px;
  display: flex;
  align-items: center;
  height: 24px;
  background: #fff;
  border: 1px solid #ccc;
  border-left: 0;
  color: #2b8fe0;
`;

const ImeLogo = styled.span`
  display: flex;
  align-items: center;
  justify-content: center;
  width: 23px;
  height: 24px;
  margin-right: 2px;
  background: #1a7fd6;
`;

const ImeKey = styled.button`
  display: flex;
  align-items: center;
  justify-content: center;
  width: 22px;
  height: 22px;
  padding-bottom: 1px;
  font-size: 15px;
`;

const Dialog = styled.div`
  position: absolute;
  top: 303px;
  left: calc(50% - 144px);
  width: 293px;
  padding: 0 6px 6px;
  background: #f0c76a;
  border: 1px solid #b9934a;
  box-shadow: 0 0 3px #bbb;
`;

const DialogTop = styled.div`
  height: 29px;
`;

const DialogClose = styled.button`
  display: flex;
  align-items: center;
  justify-content: center;
  width: 31px;
  height: 20px;
  margin-left: auto;
  background: #c75050;
  color: #fff;
`;

const DialogBody = styled.div`
  border: 1px solid #cfa850;
  background: #fff;
`;

const DialogMessage = styled.p`
  margin: 0;
  padding: 29px 12px 28px;
  line-height: 20px;
  white-space: nowrap;
`;

const DialogFooter = styled.div`
  display: flex;
  justify-content: flex-end;
  padding: 13px 10px 14px;
  background: #f0f0f0;
`;

const OkButton = styled.button`
  width: 86px;
  height: 28px;
  border: 1px solid #3399ff;
  background: linear-gradient(#f0f0f0, #e3e3e3);
`;

const StatusBar = styled.footer`
  display: flex;
  justify-content: flex-end;
  flex-shrink: 0;
  height: 28px;
  padding-right: 6px;
  background: #f4f4f4;
  border-top: 1px solid #e4e4e4;
`;

const Taskbar = styled.div`
  display: flex;
  flex-shrink: 0;
  height: 8px;
  overflow: hidden;
  background: linear-gradient(to right, #c08c2c 0, #bd862a 50%, #b08c48 65%, #c4ac7a 70%, #c4ac7a 85%, #c49a38 92%);
  border-top: 1px solid #a87c30;
`;

const TaskSlot = styled.div`
  display: flex;
  justify-content: center;
  align-items: flex-end;
  flex-shrink: 0;
  width: ${(props) => props.$width}px;

  ${(props) =>
    props.$open &&
    css`
      background: ${props.$open};
      border: 1px solid #7a5420;
      border-bottom: 0;
      box-shadow: inset 0 1px #f0dcae;
    `}
`;

const TaskMark = styled.i`
  width: ${(props) => props.$width}px;
  height: 3px;
  border-radius: 2px 2px 0 0;
  background: ${(props) => props.$color};
`;

const Clock = styled.span`
  margin-left: auto;
  padding: 1px 31px 0 0;
  color: #fff;
  line-height: 16px;
`;

const SpeedBall = styled.button`
  position: absolute;
  right: -29px;
  bottom: 9px;
  width: 48px;
  height: 48px;
  padding-left: 3px;
  border: 2px solid #eee;
  border-radius: 50%;
  background: radial-gradient(circle at 50% 25%, #7fe08c, #33a94e 75%);
  box-shadow: 0 0 0 1px #aaa, inset 0 0 0 2px #268a40;
  color: #fff;
  font-size: 13px;
  font-weight: 700;
  text-align: left;
`;
